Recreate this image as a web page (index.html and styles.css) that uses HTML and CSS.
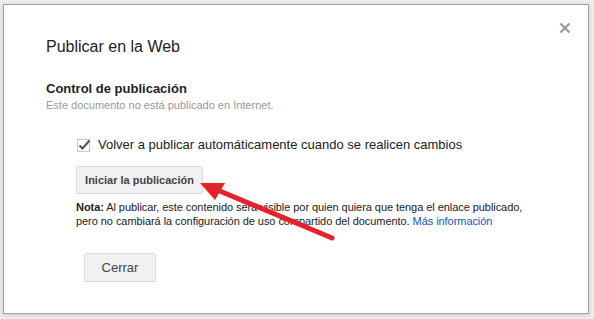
FILE: index.html
```html
<!DOCTYPE html>
<html lang="es">
  <head>
    <meta charset="UTF-8" />
    <title>Publicar en la Web</title>
    <link rel="stylesheet" href="styles.css">
  </head>
  <body>
    <div class="dialog">
      <span class="close">
        <svg width="12" height="12" viewBox="0 0 12 12"><path d="M1.5 1.5 L10.5 10.5 M10.5 1.5 L1.5 10.5" stroke="#9a9a9a" stroke-width="2.2" /></svg>
      </span>
      <h1 class="title">Publicar en la Web</h1>
      <h2 class="section">Control de publicación</h2>
      <p class="status">Este documento no está publicado en Internet.</p>
      <div class="options">
        <label class="check-row">
          <span class="checkbox">
            <svg width="15" height="15" viewBox="0 0 15 15">
              <rect x="0.5" y="1.5" width="12" height="12" fill="#fff" stroke="#c8c8c8" />
              <path d="M2.5 7.5 L5.5 10.5 L12.5 2.5" fill="none" stroke="#555" stroke-width="2" />
            </svg>
          </span>
          Volver a publicar automáticamente cuando se realicen cambios
        </label>
        <button class="btn btn-start">Iniciar la publicación</button>
        <p class="note"><b>Nota:</b> Al publicar, este contenido será visible por quien quiera que tenga el enlace publicado,<br>pero no cambiará la configuración de uso compartido del documento. <a href="#">Más información</a></p>
      </div>
      <button class="btn btn-close">Cerrar</button>
      <svg class="arrow" width="594" height="319" viewBox="0 0 594 319">
        <line x1="332" y1="238" x2="215" y2="189" stroke="#e8202a" stroke-width="5" stroke-linecap="round" />
        <polygon points="200,183 225,183 215,200" fill="#e8202a" />
      </svg>
    </div>
  </body>
</html>
```

FILE: styles.css
```css
* {
  margin: 0;
  padding: 0;
  box-sizing: border-box;
}
body {
  background: #ececec;
  padding: 4px 5px 6px 3px;
  font-family: Arial, "Liberation Sans", sans-serif;
  color: #222;
}
.dialog {
  position: relative;
  height: 310px;
  background: #fff;
  border: 1px solid #a3a3a3;
  box-shadow: 0 1px 4px rgba(0, 0, 0, 0.15);
  padding: 32px 0 0 42px;
}
.close {
  position: absolute;
  top: 17px;
  right: 17px;
  line-height: 0;
}
.title {
  font-size: 16px;
  font-weight: normal;
  line-height: 20px;
  margin-bottom: 24px;
}
.section {
  font-size: 13px;
  font-weight: bold;
  line-height: 16px;
}
.status {
  font-size: 11px;
  line-height: 14px;
  color: #999;
  margin-top: 1px;
}
.options {
  padding-left: 30px;
  margin-top: 24px;
}
.check-row {
  display: flex;
  align-items: center;
  font-size: 13px;
  line-height: 16px;
  padding-left: 1px;
}
.checkbox {
  width: 21px;
  line-height: 0;
  margin-top: 2px;
}
.btn {
  display: block;
  font-family: Arial, "Liberation Sans", sans-serif;
  background: #f1f1f1;
  border: 1px solid #dcdcdc;
  border-radius: 2px;
  color: #444;
}
.btn-start {
  margin-top: 13px;
  width: 127px;
  height: 28px;
  font-size: 11px;
  font-weight: bold;
}
.note {
  font-size: 11px;
  line-height: 14px;
  margin-top: 6px;
  letter-spacing: -0.06px;
}
.note a {
  color: #15c;
  text-decoration: none;
}
.btn-close {
  margin: 25px 0 0 38px;
  width: 72px;
  height: 29px;
  font-size: 13px;
}
.arrow {
  position: absolute;
  left: -4px;
  top: -5px;
  pointer-events: none;
}
```
